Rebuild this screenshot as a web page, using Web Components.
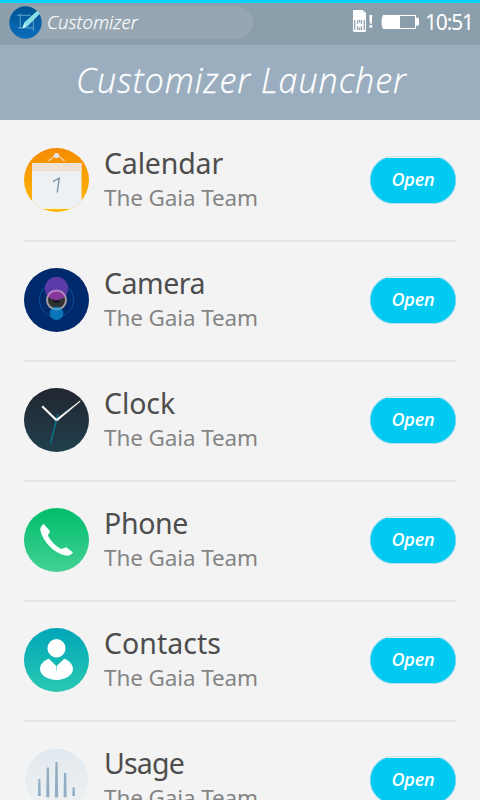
<!DOCTYPE html>
<html lang="en"><head><meta charset="utf-8"><title>Customizer Launcher</title>
<style>
html,body{margin:0;height:100%;overflow:hidden;background:#f3f3f3}
body{font-family:"Noto Sans","Open Sans",sans-serif}
</style></head><body>
<launcher-app></launcher-app>
<script>
// Single-line text whose tracking adapts to a given ink width.
class FitText extends HTMLElement{
  connectedCallback(){
    const r=this.attachShadow({mode:'open'});
    r.innerHTML='<style>:host{display:block;white-space:nowrap}span{display:inline-block}</style><span><slot></slot></span>';
    const s=r.querySelector('span'),n=this.textContent.length;
    s.style.letterSpacing='0';
    s.style.letterSpacing=((+this.getAttribute('width')-s.getBoundingClientRect().width)/n)+'px';
  }
}
customElements.define('fit-text',FitText);

const ICONS={
calendar:`<defs><linearGradient id="g" x2="0" y2="1"><stop stop-color="#f58b00"/><stop offset="1" stop-color="#fdbb0b"/></linearGradient><clipPath id="c"><ellipse cx="32.5" cy="32" rx="32.5" ry="32"/></clipPath></defs><g clip-path="url(#c)"><path fill="url(#g)" d="M0 0h65v64H0z"/><path fill="#edf1f4" d="M8 15h49.500v45.500H8z"/><path fill="#ede1d1" d="M8 15h49.500v8.300H8z"/><path d="M8 60.200h49.500" stroke="#fff"/><path d="M24.500 13l8-7 8 7" fill="none" stroke="#f3d5ae" stroke-width="1.100"/><circle cx="32.500" cy="7.500" r="2.600" fill="#dfe5ec"/><path d="M28.900 33.600l6.300-3.400-2 14.300" fill="none" stroke="#7d9aaf" stroke-width="1.500"/></g>`,
camera:`<ellipse cx="32.5" cy="32" rx="32.5" ry="32" fill="#002a6b"/><circle cx="32.500" cy="32" r="17" fill="none" stroke="#07509a"/><circle cx="32.500" cy="32" r="9.500" fill="#30343a" stroke="#a09d9e" stroke-width="2"/><circle cx="32.500" cy="32" r="7.700" fill="#303030"/><circle cx="32.500" cy="31" r="4" fill="#191b1f"/><circle cx="32.500" cy="20.500" r="11.700" fill="#6f40b4" fill-opacity=".82"/><path d="M24 28.500a9.500 9.500 0 0 1 17 0q-8.500 7-17 0" fill="#a0369a" fill-opacity=".6"/><path d="M23.700 28.600a9.500 9.500 0 0 1 17.600 0" fill="none" stroke="#bd8ac6" stroke-width="1.700"/><circle cx="32.500" cy="45.300" r="6.800" fill="#087fc1" fill-opacity=".88"/><path d="M28 40.300q4.500 2.200 9 0" fill="none" stroke="#5ba2c8" stroke-width="1.600"/>`,
clock:`<defs><linearGradient id="g" x2="0" y2="1"><stop stop-color="#222630"/><stop offset="1" stop-color="#20404d"/></linearGradient></defs><ellipse cx="32.5" cy="32" rx="32.5" ry="32" fill="url(#g)"/><path d="M34 26l-7.500 29.300" stroke="#08819a" stroke-width="1.200"/><path d="M18.200 18.200l14.300 14" stroke="#fff" stroke-width="2.200"/><path d="M31.600 31.400L56 12.500l.5.900-23.300 19.800z" fill="#f4f4f2"/>`,
phone:`<defs><linearGradient id="g" x2="0" y2="1"><stop stop-color="#00bd6c"/><stop offset="1" stop-color="#43d194"/></linearGradient></defs><ellipse cx="32.5" cy="32" rx="32.5" ry="32" fill="url(#g)"/><path fill="#fff" d="M19.700 16l6.400 7.200-2.200 4.300C27 33.500 32 38.500 37.500 41l4.700-1.700 6.800 5.200c-1.200 1.600-3 2.800-5 3.300C33 47.300 18.500 35 16.200 21.300c.4-2 1.800-4.200 3.500-5.300z"/>`,
contacts:`<defs><linearGradient id="g" x2="0" y2="1"><stop stop-color="#00a6b8"/><stop offset="1" stop-color="#2ac8b3"/></linearGradient></defs><ellipse cx="32.5" cy="32" rx="32.5" ry="32" fill="url(#g)"/><ellipse cx="32.500" cy="20.300" rx="9" ry="9.200" fill="#fff"/><path fill="#fff" d="M24.800 30.700l7.500 7.400.2 5 .2-5 7.500-7.400c5 1.800 8.800 5.800 8.800 10.300 0 6-7.500 10.900-16.500 10.900S16 47 16 41c0-4.500 3.800-8.500 8.800-10.300z"/><path d="M32.500 38v5" stroke="#6fcfc9" stroke-width=".6"/>`,
usage:`<defs><linearGradient id="g" x2="0" y2="1"><stop stop-color="#e2e9ee"/><stop offset="1" stop-color="#edf1f3"/></linearGradient></defs><ellipse cx="32.5" cy="32" rx="32.2" ry="31.700" fill="url(#g)" stroke="#f8fafb" stroke-width=".8"/><g fill="#93aec2"><path d="M14.400 31h1.900l.5 17h-2.900zM22.700 19.500h2.200l.6 29.800h-3.300zM31.400 14h2.200l.6 35.500h-3.400zM40 25h2.200l.5 24.200h-3.100zM48.700 39.200h1.900l.5 8.800h-2.800z"/></g>`
};
class AppIcon extends HTMLElement{
  connectedCallback(){
    this.attachShadow({mode:'open'}).innerHTML=`<style>:host{display:block;width:65px;height:64px;flex:none}svg{display:block}</style><svg width="65" height="64" viewBox="0 0 65 64">${ICONS[this.getAttribute('name')]}</svg>`;
  }
}
customElements.define('app-icon',AppIcon);

class OpenButton extends HTMLElement{
  connectedCallback(){
    this.attachShadow({mode:'open'}).innerHTML=`<style>:host{display:block;width:86px;height:48px;flex:none}
    button{display:flex;justify-content:center;width:86px;height:48px;margin:0;padding:9px 0 0;border:0;border-radius:24px;background:linear-gradient(#f3f3f3 1.500px,#00caf2 2px,#00caf2 46.500px,#dbe5e8 47px);box-shadow:inset 0 0 0 .6px #9fdce9;color:#fff;font:italic 600 18px/29px "Open Sans",sans-serif}</style>
    <button><fit-text width="43">Open</fit-text></button>`;
  }
}
customElements.define('open-button',OpenButton);

class AppRow extends HTMLElement{
  connectedCallback(){
    const w=this.getAttribute('width');
    this.attachShadow({mode:'open'}).innerHTML=`<style>
    :host{display:flex;height:122px;margin:0 24px -2px;box-sizing:border-box;border-bottom:2px solid #e6e6e6;padding-top:28px}
    .t{flex:1;padding-left:15px}
    .n{color:#4d4d4d;font-size:28.500px;line-height:32px;margin-top:-1px}
    .a{color:#858585;font-size:22.500px;line-height:30px;margin-top:4px}
    open-button{margin-top:8px}</style>
    <app-icon name="${this.getAttribute('icon')}"></app-icon>
    <div class="t"><fit-text class="n" width="${w}">${this.getAttribute('label')}</fit-text><fit-text class="a" width="154">The Gaia Team</fit-text></div>
    <open-button></open-button>`;
  }
}
customElements.define('app-row',AppRow);

class StatusBar extends HTMLElement{
  connectedCallback(){
    this.attachShadow({mode:'open'}).innerHTML=`<style>
    :host{display:flex;height:45px;box-sizing:border-box;border-top:3px solid #00d2ff;background:#8b9eab;color:#fff;padding-right:7px}
    .pill{display:flex;width:245px;height:33px;margin:3px 0 0 9px;background:#96a6b2;border-radius:17px}
    .pill svg{flex:none}
    .name{font:italic 300 18.500px/30px "Open Sans",sans-serif;-webkit-text-stroke:.25px #fff;margin-left:5px;padding-top:1px}
    .sys{margin:6px 0 0 98px;flex:none}
    .time{font-size:21px;line-height:28px;margin:5px 0 0 6px}
    </style>
    <div class="pill"><svg width="33" height="33" viewBox="0 0 33 33"><defs><linearGradient id="g" x2="0" y2="1"><stop stop-color="#005291"/><stop offset="1" stop-color="#0c6ebd"/></linearGradient></defs><circle cx="16.500" cy="16.500" r="16.200" fill="url(#g)"/><path d="M8 9.300h14M11.200 7.500v15.500M9 21.800h16M24.300 14v11" fill="none" stroke="#58a9cc"/><path d="M13.300 22.500l2-6L27.800 5.200q2.200-.4 3 2.600L19 19.800z" fill="#8fe4ea"/><path d="M13.300 22.500l1.800-4.300 2.400 2.400z" fill="#d4fbfa"/><path d="M17.500 17.800L29 6.800" stroke="#4eb2c5" stroke-width=".7" stroke-dasharray="1 1"/></svg><fit-text class="name" width="91">Customizer</fit-text></div>
    <svg class="sys" width="68" height="24" viewBox="351 9 68 24"><path fill="#fff" d="M354 10h8.500l3.500 3v17.500q0 1.500-1.500 1.500h-10q-1.500 0-1.500-1.500V11q0-1 1-1z"/><path d="M354.700 20v10M364.300 20v10M357.700 20v4M361.500 20v4M357.700 26v4M361.500 26v4M359.600 20v2.500M359.600 27.500v2.500" stroke="#8b9eab" stroke-width="1.200"/><path fill="#fff" d="M369.300 15h3l-.5 8.700h-2zM369.500 25h2.700v2.800h-2.700z"/><path fill="#fff" fill-rule="evenodd" d="M383 15h33v2.700h2q1 0 1 1v6q0 1-1 1h-2V29h-33q-1.500-2.800-1.500-7t1.500-7zM400 16v12h15V16z"/></svg>
    <fit-text class="time" width="48">10:51</fit-text>`;
  }
}
customElements.define('status-bar',StatusBar);

class LauncherApp extends HTMLElement{
  connectedCallback(){
    this.attachShadow({mode:'open'}).innerHTML=`<style>:host{display:block;width:480px;height:800px;overflow:hidden;background:#f3f3f3}
    header{display:flex;justify-content:center;height:75px;background:#9aaebf;color:#fff;font:italic 300 34px/70px "Open Sans",sans-serif;-webkit-text-stroke:.3px #fff;padding-left:3px;box-sizing:border-box}</style>
    <status-bar></status-bar><header><fit-text width="331">Customizer Launcher</fit-text></header>
    <main>
    <app-row icon="calendar" label="Calendar" width="119"></app-row>
    <app-row icon="camera" label="Camera" width="101"></app-row>
    <app-row icon="clock" label="Clock" width="71"></app-row>
    <app-row icon="phone" label="Phone" width="84"></app-row>
    <app-row icon="contacts" label="Contacts" width="117"></app-row>
    <app-row icon="usage" label="Usage" width="80"></app-row>
    </main>`;
  }
}
customElements.define('launcher-app',LauncherApp);
</script></body></html>
